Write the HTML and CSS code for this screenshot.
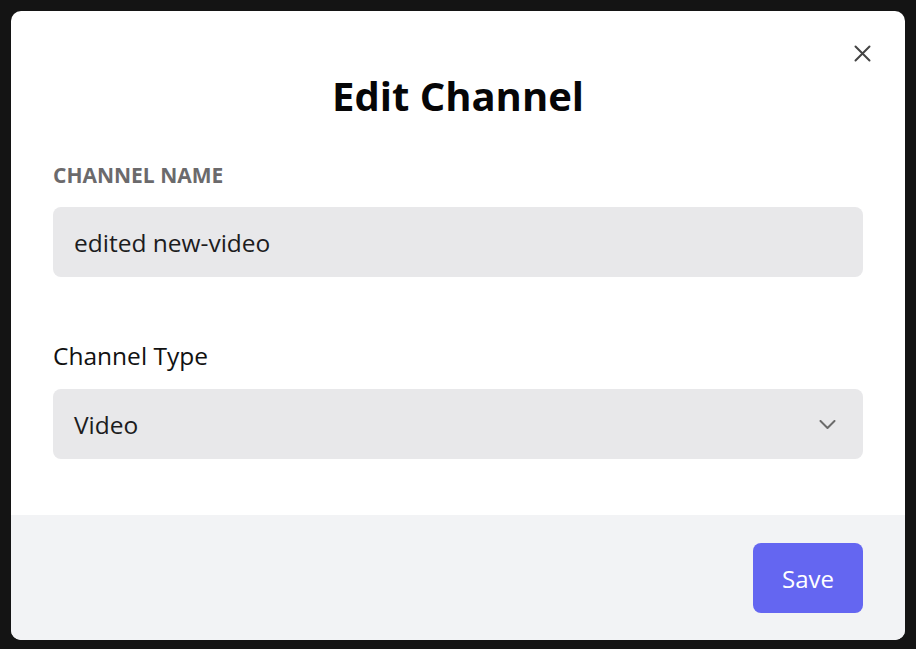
FILE: index.html
```html
<!DOCTYPE html>
<html lang="en">
<head>
<meta charset="utf-8">
<title>Edit Channel</title>
<link rel="stylesheet" href="styles.css">
</head>
<body>
<div class="modal">
  <button class="close" aria-label="Close">
    <svg width="17" height="17" viewBox="0 0 17 17"><path d="M1.5 1.5 L15.5 15.5 M15.5 1.5 L1.5 15.5" stroke="#444" stroke-width="2" stroke-linecap="round" fill="none"/></svg>
  </button>
  <div class="modal-body">
    <h1 class="title">Edit Channel</h1>
    <label class="label-caps">CHANNEL NAME</label>
    <div class="field">edited new-video</div>
    <label class="label">Channel Type</label>
    <div class="field select">
      <span>Video</span>
      <svg class="chev" width="17" height="9" viewBox="0 0 17 9"><path d="M1.5 1 L8.5 8 L15.5 1" stroke="#6b6b6b" stroke-width="2" stroke-linecap="round" stroke-linejoin="round" fill="none"/></svg>
    </div>
  </div>
  <div class="modal-footer">
    <button class="save">Save</button>
  </div>
</div>
</body>
</html>
```
FILE: styles.css
```css
* { box-sizing: border-box; }
html, body { margin: 0; height: 100%; }
body {
  background: #141414;
  padding: 11px;
  font-family: "Open Sans", "Noto Sans", sans-serif;
}
.modal {
  position: relative;
  width: 894px;
  height: 629px;
  background: #ffffff;
  border-radius: 10px;
  overflow: hidden;
  display: flex;
  flex-direction: column;
}
.close {
  position: absolute;
  top: 32px;
  right: 33px;
  width: 20px;
  height: 20px;
  padding: 0;
  border: 0;
  background: transparent;
  display: flex;
  align-items: center;
  justify-content: center;
}
.modal-body {
  flex: 1;
  padding: 61px 42px 0;
  display: flex;
  flex-direction: column;
}
.title {
  margin: 0;
  text-align: center;
  font-size: 40px;
  line-height: 48px;
  font-weight: 700;
  color: #060607;
}
.label-caps {
  margin-top: 41px;
  font-size: 21px;
  line-height: 28px;
  font-weight: 700;
  color: #6b6a6c;
}
.field {
  margin-top: 18px;
  height: 70px;
  background: #e8e8ea;
  border-radius: 8px;
  padding: 0 21px;
  display: flex;
  align-items: center;
  font-size: 24.5px;
  color: #1c1c1e;
}
.label {
  margin-top: 63px;
  font-size: 24.5px;
  line-height: 32px;
  color: #111;
}
.field.select {
  margin-top: 17px;
  justify-content: space-between;
  padding-right: 27px;
}
.modal-footer {
  height: 125px;
  background: #f2f3f5;
  padding: 28px 42px;
  display: flex;
  justify-content: flex-end;
}
.save {
  width: 110px;
  height: 70px;
  border: 0;
  border-radius: 8px;
  background: #6466f1;
  color: #fff;
  font-family: inherit;
  font-size: 24px;
  font-weight: 500;
}
```
